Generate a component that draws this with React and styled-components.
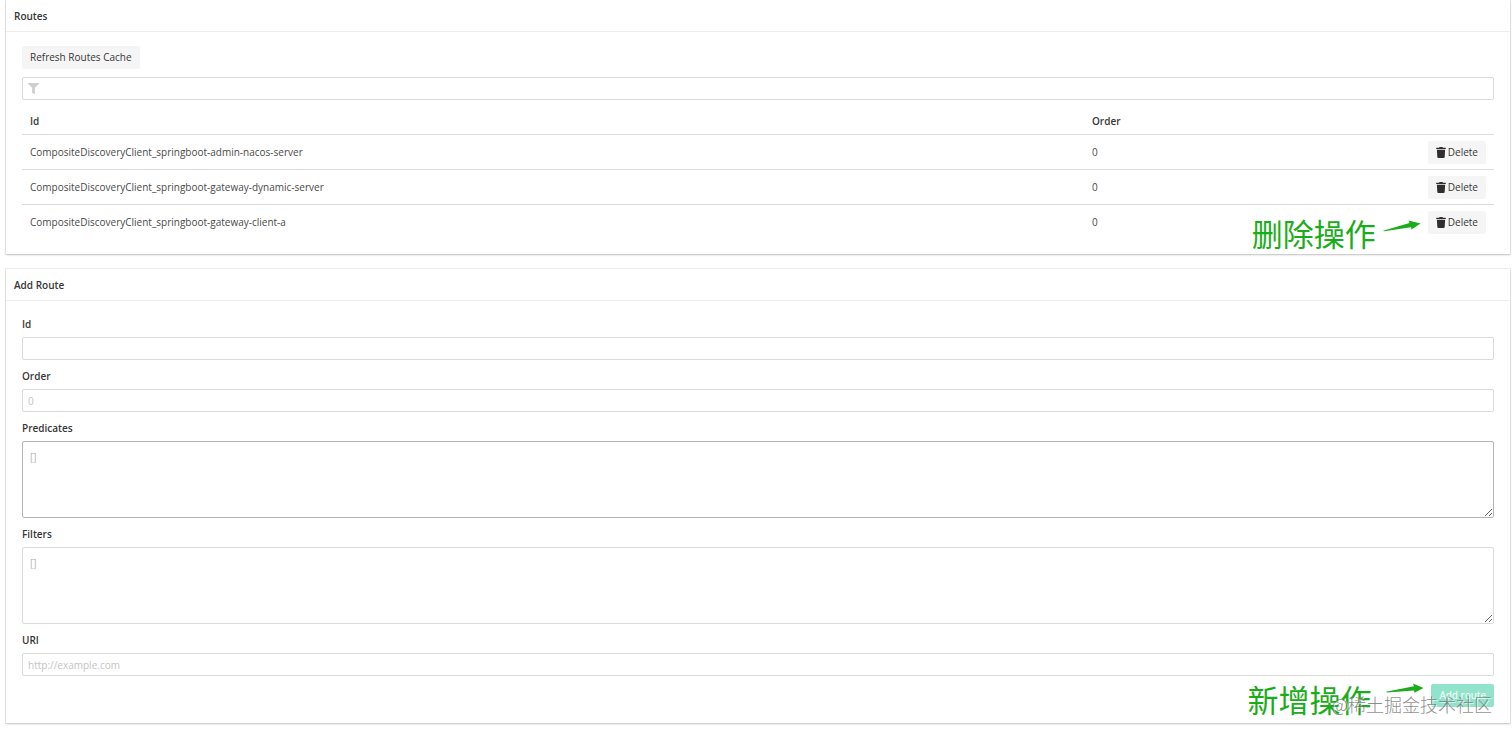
import { useState } from "react";
import styled, { createGlobalStyle } from "styled-components";

const routes = [
  { id: "CompositeDiscoveryClient_springboot-admin-nacos-server", order: 0 },
  { id: "CompositeDiscoveryClient_springboot-gateway-dynamic-server", order: 0 },
  { id: "CompositeDiscoveryClient_springboot-gateway-client-a", order: 0, note: "删除操作" },
];

const TrashIcon = () => (
  <StTrash viewBox="0 0 448 512" aria-hidden="true">
    <path d="M432 32H312l-9-19a24 24 0 0 0-22-13H167a24 24 0 0 0-22 13l-9 19H16A16 16 0 0 0 0 48v32a16 16 0 0 0 16 16h416a16 16 0 0 0 16-16V48a16 16 0 0 0-16-16zM32 128l21 339a48 48 0 0 0 48 45h246a48 48 0 0 0 48-45l21-339z" />
  </StTrash>
);

const FilterIcon = () => (
  <svg viewBox="0 0 512 512" width="11" height="11" fill="#cfcfcf" aria-hidden="true">
    <path d="M488 0H24C3 0-8 26 7 41l185 185v206c0 8 4 15 10 20l80 55c16 11 38 0 38-19V226L505 41c15-15 4-41-17-41z" />
  </svg>
);

const DeleteNote = ({ text }) => (
  <StNote $gap="7px" $top="2px">
    <StNoteText>{text}</StNoteText>
    <StArrow $top="7px" viewBox="0 0 38 12" aria-hidden="true">
      <path d="M0 10.700L26.500 3L25.500 .6L37.500 3.600L28.500 9.600L28 7.200L1 11.200Z" />
    </StArrow>
  </StNote>
);

const AddNote = ({ text }) => (
  <StNote $gap="15px" $top="-5px">
    <StNoteText>{text}</StNoteText>
    <StArrow $top="4px" viewBox="0 0 38 12" aria-hidden="true">
      <path d="M0 8.800L28 3.200L27 .6L37.500 5L28.500 9.800L28 7.400L1 9.600Z" />
    </StArrow>
  </StNote>
);

const App = () => {
  const [filter, setFilter] = useState("");
  const [form, setForm] = useState({ id: "", order: "", predicates: "", filters: "", uri: "" });

  const onChangeHandler = (e) => {
    setForm({ ...form, [e.target.name]: e.target.value });
  };

  return (
    <StPage>
      <GlobalStyle />
      <StCard>
        <StHeader>Routes</StHeader>
        <StBody>
          <StButton type="button">Refresh Routes Cache</StButton>
          <StFilter>
            <FilterIcon />
            <input
              aria-label="Filter"
              value={filter}
              onChange={(e) => setFilter(e.target.value)}
            />
          </StFilter>
          <StTable>
            <thead>
              <tr>
                <StTh>Id</StTh>
                <StTh $width="300px">Order</StTh>
                <StTh $width="110px" />
              </tr>
            </thead>
            <tbody>
              {routes
                .filter((route) => route.id.includes(filter))
                .map((route) => (
                  <tr key={route.id}>
                    <StTd>{route.id}</StTd>
                    <StTd>{route.order}</StTd>
                    <StTd $right>
                      <StAnchor>
                        {route.note && <DeleteNote text={route.note} />}
                        <StButton type="button">
                          <TrashIcon />
                          Delete
                        </StButton>
                      </StAnchor>
                    </StTd>
                  </tr>
                ))}
            </tbody>
          </StTable>
        </StBody>
      </StCard>

      <StCard>
        <StHeader>Add Route</StHeader>
        <StForm onSubmit={(e) => e.preventDefault()}>
          <StField>
            <StLabel htmlFor="id">Id</StLabel>
            <StInput id="id" name="id" value={form.id} onChange={onChangeHandler} />
          </StField>
          <StField>
            <StLabel htmlFor="order">Order</StLabel>
            <StInput
              id="order"
              name="order"
              placeholder="0"
              value={form.order}
              onChange={onChangeHandler}
            />
          </StField>
          <StField>
            <StLabel htmlFor="predicates">Predicates</StLabel>
            <StTextarea
              id="predicates"
              name="predicates"
              placeholder="[]"
              $active
              value={form.predicates}
              onChange={onChangeHandler}
            />
          </StField>
          <StField>
            <StLabel htmlFor="filters">Filters</StLabel>
            <StTextarea
              id="filters"
              name="filters"
              placeholder="[]"
              value={form.filters}
              onChange={onChangeHandler}
            />
          </StField>
          <StField>
            <StLabel htmlFor="uri">URI</StLabel>
            <StInput
              id="uri"
              name="uri"
              placeholder="http://example.com"
              value={form.uri}
              onChange={onChangeHandler}
            />
          </StField>
          <StActions>
            <StAnchor>
              <AddNote text="新增操作" />
              <StButton type="submit" $primary>
                Add route
              </StButton>
            </StAnchor>
          </StActions>
        </StForm>
        <StWatermark>@稀土掘金技术社区</StWatermark>
      </StCard>
    </StPage>
  );
};

const GlobalStyle = createGlobalStyle`
  * {
    box-sizing: border-box;
  }
  body {
    margin: 0;
    background-color: #fff;
    color: #4a4a4a;
    font-family: "Open Sans", "Noto Sans CJK SC", sans-serif;
    font-size: 10px;
    line-height: 17px;
  }
  button, input, textarea {
    font: inherit;
    color: inherit;
  }
`;
const StPage = styled.main`
  display: flex;
  flex-direction: column;
  gap: 15px;
  padding: 0 2px 13px 6px;
`;
const StCard = styled.section`
  position: relative;
  box-shadow: 0 1px 2px rgba(10, 10, 10, 0.2), 0 0 0 1px rgba(10, 10, 10, 0.07);
`;
const StHeader = styled.header`
  height: 32px;
  padding: 8px;
  border-bottom: 1px solid #ededed;
  color: #363636;
  font-weight: 600;
  line-height: 16px;
`;
const StBody = styled.div`
  padding: 14px 16px 16px;
`;
const StForm = styled.form`
  display: flex;
  flex-direction: column;
  gap: 8px;
  padding: 15px 16px 16px;
`;
const StField = styled.div`
  display: flex;
  flex-direction: column;
  gap: 4px;
`;
const StLabel = styled.label`
  color: #363636;
  font-weight: 600;
`;
const StButton = styled.button`
  display: inline-flex;
  align-items: center;
  gap: 2px;
  height: 23px;
  padding: 0 8px;
  border: none;
  border-radius: 2px;
  background-color: ${({ $primary }) => ($primary ? "#92e3cb" : "#f5f5f5")};
  color: ${({ $primary }) => ($primary ? "#fff" : "#363636")};
  white-space: nowrap;
  cursor: pointer;
`;
const StTrash = styled.svg`
  width: 10px;
  height: 11px;
  fill: #2f2f2f;
`;
const StFilter = styled.div`
  display: flex;
  align-items: center;
  gap: 6px;
  height: 23px;
  margin-top: 8px;
  padding: 0 5px;
  border: 1px solid #dbdbdb;
  border-radius: 2px;
  input {
    flex: 1;
    border: none;
    outline: none;
    background-color: transparent;
  }
`;
const StTable = styled.table`
  width: 100%;
  table-layout: fixed;
  border-collapse: collapse;
`;
const StTh = styled.th`
  width: ${({ $width }) => $width || "auto"};
  height: 34px;
  padding: 10px 8px 0;
  border-bottom: 1px solid #dbdbdb;
  color: #363636;
  font-weight: 600;
  text-align: left;
`;
const StTd = styled.td`
  height: 35px;
  padding: 2px 8px 0;
  border-bottom: 1px solid #dbdbdb;
  text-align: ${({ $right }) => ($right ? "right" : "left")};
  tr:last-child > & {
    height: 34px;
    border-bottom: none;
  }
`;
const StInput = styled.input`
  width: 100%;
  height: 23px;
  padding: 0 5px;
  border: 1px solid #dbdbdb;
  border-radius: 2px;
  outline: none;
  &::placeholder {
    color: #c4c4c4;
  }
`;
const StTextarea = styled.textarea`
  display: block;
  width: 100%;
  height: 77px;
  padding: 7px;
  border: 1px solid ${({ $active }) => ($active ? "#b5b5b5" : "#dbdbdb")};
  border-radius: 2px;
  outline: none;
  resize: vertical;
  &::placeholder {
    color: #b8b8b8;
  }
`;
const StActions = styled.div`
  display: flex;
  justify-content: flex-end;
`;
const StAnchor = styled.div`
  display: inline-flex;
  position: relative;
  vertical-align: middle;
`;
/* green hint next to a button */
const StNote = styled.div`
  display: flex;
  align-items: flex-start;
  gap: ${({ $gap }) => $gap};
  position: absolute;
  top: ${({ $top }) => $top};
  right: 100%;
  margin-right: 7px;
  pointer-events: none;
`;
const StNoteText = styled.span`
  color: #1aad19;
  font-family: "Noto Sans CJK SC", sans-serif;
  font-size: 31px;
  font-weight: 400;
  line-height: 40px;
  white-space: nowrap;
`;
const StArrow = styled.svg`
  flex: none;
  width: 38px;
  height: 12px;
  margin-top: ${({ $top }) => $top};
  fill: #1aad19;
`;
const StWatermark = styled.span`
  position: absolute;
  right: 18px;
  bottom: 6px;
  color: rgba(110, 110, 110, 0.8);
  font-family: "Noto Sans CJK SC", sans-serif;
  font-size: 18px;
  font-weight: 300;
  line-height: 26px;
  text-shadow: 1px 1px 0 rgba(255, 255, 255, 0.7);
  pointer-events: none;
`;

export default App;
